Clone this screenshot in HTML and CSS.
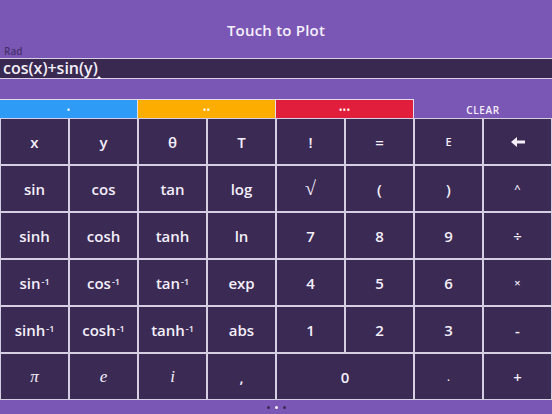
FILE: index.html
```html
<!DOCTYPE html>
<html>
<head>
<meta charset="utf-8">
<link rel="stylesheet" href="styles.css">
</head>
<body>
<div class="app">
  <header class="header">
    <div class="title">Touch to Plot</div>
    <div class="rad">Rad</div>
  </header>
  <div class="expr">cos(x)+sin(y)<span class="caret"></span></div>
  <div class="spacer"></div>
  <div class="tabs">
    <div class="tab blue">•</div>
    <div class="tab orange">••</div>
    <div class="tab red">•••</div>
    <div class="clear">CLEAR</div>
  </div>
  <div class="keys">
    <div class="key">x</div>
    <div class="key">y</div>
    <div class="key">θ</div>
    <div class="key">T</div>
    <div class="key">!</div>
    <div class="key">=</div>
    <div class="key small">E</div>
    <div class="key"><svg class="arrow" width="14" height="10" viewBox="0 0 14 10"><path d="M0 5 L6 0 L6 3.4 L14 3.4 L14 6.6 L6 6.6 L6 10 Z" fill="#f4effa"/></svg></div>

    <div class="key">sin</div>
    <div class="key">cos</div>
    <div class="key">tan</div>
    <div class="key">log</div>
    <div class="key serif root">√</div>
    <div class="key">(</div>
    <div class="key">)</div>
    <div class="key small">^</div>

    <div class="key">sinh</div>
    <div class="key">cosh</div>
    <div class="key">tanh</div>
    <div class="key">ln</div>
    <div class="key">7</div>
    <div class="key">8</div>
    <div class="key">9</div>
    <div class="key">÷</div>

    <div class="key">sin<sup>-1</sup></div>
    <div class="key">cos<sup>-1</sup></div>
    <div class="key">tan<sup>-1</sup></div>
    <div class="key">exp</div>
    <div class="key">4</div>
    <div class="key">5</div>
    <div class="key">6</div>
    <div class="key small">×</div>

    <div class="key">sinh<sup>-1</sup></div>
    <div class="key">cosh<sup>-1</sup></div>
    <div class="key">tanh<sup>-1</sup></div>
    <div class="key">abs</div>
    <div class="key">1</div>
    <div class="key">2</div>
    <div class="key">3</div>
    <div class="key">-</div>

    <div class="key serif ital">π</div>
    <div class="key serif ital">e</div>
    <div class="key serif ital">i</div>
    <div class="key">,</div>
    <div class="key wide">0</div>
    <div class="key small">.</div>
    <div class="key">+</div>
  </div>
  <footer class="pager">
    <span class="dot"></span>
    <span class="dot on"></span>
    <span class="dot"></span>
  </footer>
</div>
</body>
</html>
```
FILE: styles.css
```css
* { box-sizing: border-box; }
html, body {
  margin: 0;
  padding: 0;
}
body {
  width: 552px;
  height: 414px;
  overflow: hidden;
  background: #7b57b5;
  font-family: "Open Sans", "Noto Sans", sans-serif;
  color: #f4effa;
}
.app {
  width: 552px;
  height: 414px;
  display: flex;
  flex-direction: column;
}
.header {
  height: 58px;
  display: flex;
  flex-direction: column;
}
.title {
  height: 46px;
  padding-top: 14px;
  line-height: 32px;
  text-align: center;
  font-size: 15px;
  font-weight: 600;
  letter-spacing: 0.2px;
}
.rad {
  height: 12px;
  line-height: 10px;
  font-size: 10px;
  padding-left: 4px;
  color: #46316c;
  font-weight: 600;
}
.expr {
  position: relative;
  height: 21px;
  border-top: 1px solid #d8d0e6;
  border-bottom: 1px solid #d8d0e6;
  background: #39284f;
  font-size: 16px;
  font-weight: 600;
  line-height: 18px;
  padding-left: 3px;
  white-space: nowrap;
}
.caret {
  position: absolute;
  left: 96px;
  bottom: -1px;
  width: 0;
  height: 0;
  border-left: 3px solid transparent;
  border-right: 3px solid transparent;
  border-bottom: 3px solid #f4effa;
}
.spacer {
  height: 20px;
}
.tabs {
  height: 19px;
  display: flex;
}
.tab {
  flex: 0 0 138px;
  border-top: 1px solid #e2dcec;
  border-right: 1px solid #e2dcec;
  display: flex;
  align-items: center;
  justify-content: center;
  font-size: 10px;
  letter-spacing: 0;
  color: #ffffff;
  padding-top: 1px;
}
.blue { background: #2e9bf6; }
.orange { background: #fdad00; }
.red { background: #e11e3b; }
.clear {
  flex: 1;
  display: flex;
  align-items: center;
  justify-content: center;
  font-size: 10px;
  font-weight: 600;
  letter-spacing: 0.6px;
  padding-top: 2px;
}
.keys {
  height: 282px;
  padding: 1px;
  background: #d6cee2;
  display: grid;
  grid-template-columns: repeat(8, 1fr);
  grid-template-rows: repeat(6, 45px);
  gap: 2px;
}
.key {
  background: #3b2a54;
  display: flex;
  align-items: center;
  justify-content: center;
  font-size: 15px;
  font-weight: 600;
  white-space: nowrap;
}
.key sup {
  font-size: 9px;
  line-height: 0;
  position: relative;
  top: -1px;
  margin-left: 1px;
}
.key.small {
  font-size: 11px;
  font-weight: 600;
}
.key.serif {
  font-family: "Liberation Serif", "DejaVu Serif", serif;
  font-weight: 400;
}
.key.ital {
  font-style: italic;
  font-size: 17px;
}
.key.root {
  font-size: 20px;
}
.key.wide {
  grid-column: span 2;
}
.pager {
  flex: 1;
  display: flex;
  align-items: center;
  justify-content: center;
  gap: 5px;
}
.dot {
  width: 3px;
  height: 3px;
  border-radius: 50%;
  background: #3b2a54;
}
.dot.on {
  background: #f4effa;
}
```
